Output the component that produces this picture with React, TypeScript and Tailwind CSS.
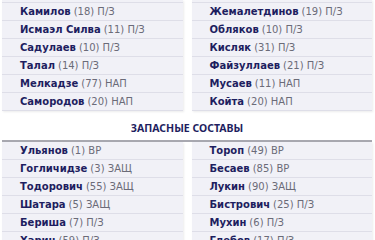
const mainLeft = [
  ['Камилов', '18', 'П/З'],
  ['Исмаэл Силва', '11', 'П/З'],
  ['Садулаев', '10', 'П/З'],
  ['Талал', '14', 'П/З'],
  ['Мелкадзе', '77', 'НАП'],
  ['Самородов', '20', 'НАП'],
];

const mainRight = [
  ['Жемалетдинов', '19', 'П/З'],
  ['Обляков', '10', 'П/З'],
  ['Кисляк', '31', 'П/З'],
  ['Файзуллаев', '21', 'П/З'],
  ['Мусаев', '11', 'НАП'],
  ['Койта', '20', 'НАП'],
];

const subsLeft = [
  ['Ульянов', '1', 'ВР'],
  ['Гогличидзе', '3', 'ЗАЩ'],
  ['Тодорович', '55', 'ЗАЩ'],
  ['Шатара', '5', 'ЗАЩ'],
  ['Бериша', '7', 'П/З'],
  ['Харин', '59', 'П/З'],
];

const subsRight = [
  ['Тороп', '49', 'ВР'],
  ['Бесаев', '85', 'ВР'],
  ['Лукин', '90', 'ЗАЩ'],
  ['Бистрович', '25', 'П/З'],
  ['Мухин', '6', 'П/З'],
  ['Глебов', '17', 'П/З'],
];

const PlayerList = ({ players, top }: { players: string[][]; top?: boolean }) => (
  <ul className={top ? 'bg-[#f1f1f7] pt-[2px] -mt-[2px] shadow-[1px_1px_2px_rgba(0,0,0,0.08)]' : 'shadow-[1px_1px_2px_rgba(0,0,0,0.08)]'}>
    {players.map(([name, num, pos], i) => (
      <li
        key={name}
        className={
          i === 0 && top
            ? 'h-[19px] flex items-center pl-[18px] bg-[#f1f1f7] border-t border-b border-[#dedee8] text-[10px] leading-none whitespace-nowrap'
            : 'h-[18px] flex items-center pl-[18px] bg-[#f1f1f7] border-b border-[#dedee8] text-[10px] leading-none whitespace-nowrap'
        }
      >
        <span className="font-bold text-[#1e1e60]">{name}</span>
        <span className="ml-[3px] text-[#6b6b78]">
          ({num}) {pos}
        </span>
      </li>
    ))}
  </ul>
);

export default function App() {
  return (
    <div className="w-[375px] h-[240px] overflow-hidden bg-white font-['DejaVu_Sans',sans-serif] pt-[2px] pl-[2px] pr-[3px]">
      <div className="grid grid-cols-2 gap-[9px]">
        <PlayerList players={mainLeft} top />
        <PlayerList players={mainRight} top />
      </div>
      <h3 className="mt-[12px] pb-[6px] text-center font-['Noto_Sans',sans-serif] text-[10.5px] leading-[11px] font-bold text-[#1e1e60] border-b-2 border-[#a8a8b0]">
        ЗАПАСНЫЕ СОСТАВЫ
      </h3>
      <div className="grid grid-cols-2 gap-[9px]">
        <PlayerList players={subsLeft} />
        <PlayerList players={subsRight} />
      </div>
    </div>
  );
}
